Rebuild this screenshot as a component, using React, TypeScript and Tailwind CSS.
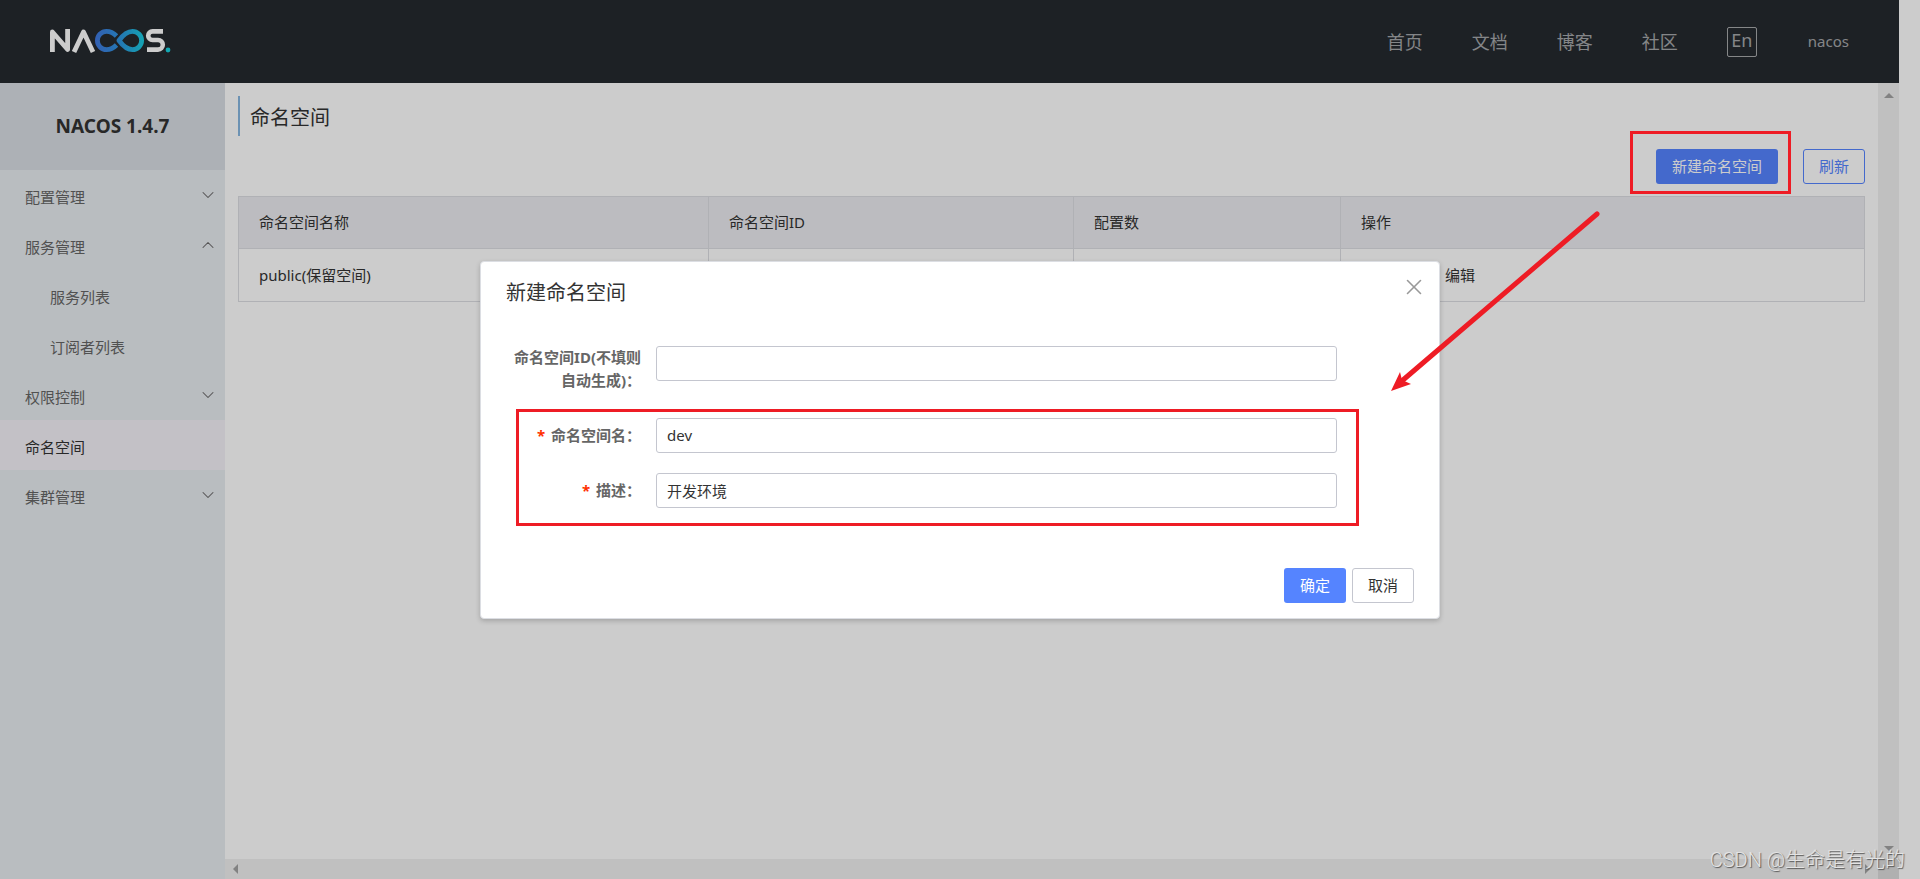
import React from "react";
import { ChevronDown, ChevronUp, X } from "lucide-react";

const fontStack = "font-['Noto_Sans','Noto_Sans_CJK_SC',sans-serif]";

const navItems = ["首页", "文档", "博客", "社区"];

const menuItems = [
  { label: "配置管理", arrow: "down" },
  { label: "服务管理", arrow: "up" },
  { label: "服务列表", child: true },
  { label: "订阅者列表", child: true },
  { label: "权限控制", arrow: "down" },
  { label: "命名空间", active: true },
  { label: "集群管理", arrow: "down" },
];

const Logo = () => (
  <svg width="122" height="26" viewBox="0 0 122 26" fill="none" aria-label="NACOS">
    <defs>
      <linearGradient id="loop" x1="45" y1="0" x2="96" y2="0" gradientUnits="userSpaceOnUse">
        <stop stopColor="#4078e0" />
        <stop offset="0.5" stopColor="#2d96e0" />
        <stop offset="1" stopColor="#18d2e0" />
      </linearGradient>
    </defs>
    <path d="M2.400 23V3L17.600 20.500V0" stroke="#fff" strokeWidth="4.8" strokeLinejoin="round" />
    <path d="M24 23L33.500 3L43 23" stroke="#fff" strokeWidth="4.8" strokeLinejoin="round" />
    <path
      d="M66.500 7C63.500 4 60 2.400 56.500 2.400a9.100 9.100 0 0 0 0 18.200c3.500 0 7-1.600 10-4.600M69 11.500C73 6 77.500 2.400 82.500 2.400a9.100 9.100 0 0 1 0 18.200c-5 0-9.500-3.600-13.500-9.100Z"
      stroke="url(#loop)"
      strokeWidth="4.8"
      strokeLinejoin="round"
    />
    <path
      d="M113 2.400h-10.500a4.300 4.300 0 0 0 0 8.600h5.500a4.800 4.800 0 0 1 0 9.600H97"
      stroke="#fff"
      strokeWidth="4.6"
    />
    <circle cx="118" cy="21" r="2.400" fill="#18d2e0" />
  </svg>
);

const Header = () => (
  <header className="flex h-[83px] shrink-0 items-center justify-between bg-[#252a2f] px-[50px]">
    <a href="#">
      <Logo />
    </a>
    <nav className="flex items-center gap-[49px] text-lg text-white/60">
      {navItems.map((item) => (
        <a key={item} href="#">
          {item}
        </a>
      ))}
      <button className="h-[30px] w-[30px] rounded-xs border border-white/60 pb-1 leading-6">
        En
      </button>
      <a href="#" className="pl-0.5 text-[15px]">
        nacos
      </a>
    </nav>
  </header>
);

const Sidebar = () => (
  <aside className="w-[225px] shrink-0 bg-[#e8edf0] text-[15px] text-[#666]">
    <h1 className="flex h-[87px] items-center justify-center bg-[#d9dee4] text-[19px] font-bold text-[#333]">
      NACOS 1.4.7
    </h1>
    <ul>
      {menuItems.map((item) => (
        <li key={item.label}>
          <a
            href="#"
            className={`flex h-[50px] items-center justify-between pr-[7px] ${
              item.child ? "pl-[50px]" : "pl-[25px]"
            } ${item.active ? "bg-[#f4f2f8] text-[#333]" : ""}`}
          >
            <span className="pt-1">{item.label}</span>
            {item.arrow === "down" && <ChevronDown size={20} strokeWidth={1.25} />}
            {item.arrow === "up" && <ChevronUp size={20} strokeWidth={1.25} />}
          </a>
        </li>
      ))}
    </ul>
  </aside>
);

const NamespaceTable = () => (
  <table className="mt-3 w-full table-fixed border-collapse text-left text-[15px] text-[#333]">
    <colgroup>
      <col className="w-[470px]" />
      <col className="w-[365px]" />
      <col className="w-[267px]" />
      <col />
    </colgroup>
    <thead className="bg-[#ebecf0]">
      <tr className="h-[52px]">
        {["命名空间名称", "命名空间ID", "配置数", "操作"].map((title) => (
          <th key={title} className="border border-[#dcdee3] px-5 font-normal">
            {title}
          </th>
        ))}
      </tr>
    </thead>
    <tbody>
      <tr className="h-[53px]">
        <td className="border border-[#dcdee3] px-5">public(保留空间)</td>
        <td className="border border-[#dcdee3] px-5"></td>
        <td className="border border-[#dcdee3] px-5">0</td>
        <td className="border border-[#dcdee3] px-5">
          <div className="flex gap-3">
            <a href="#">详情</a>
            <a href="#">删除</a>
            <a href="#">编辑</a>
          </div>
        </td>
      </tr>
    </tbody>
  </table>
);

const Content = () => (
  <main className="grid min-w-0 flex-1 grid-cols-[1fr_21px] grid-rows-[1fr_20px]">
    <section className="px-[13px] pt-[13px]">
      <h2 className="h-10 border-l-2 border-[#88b7e0] pl-[10px] text-xl leading-11 text-[#333]">
        命名空间
      </h2>
      <div className="mt-[13px] flex justify-end gap-[25px] text-[15px]">
        <div className="relative">
          <button className="h-[35px] rounded-[3px] bg-[#5584ff] px-4 text-white">
            新建命名空间
          </button>
          <div className="absolute -top-[18px] -right-[13px] -bottom-[10px] -left-[26px] z-20 border-3 border-[#ee1c25]" />
        </div>
        <button className="h-[35px] rounded-[3px] border border-[#5584ff] px-[15px] text-[#5584ff]">
          刷新
        </button>
      </div>
      <NamespaceTable />
    </section>
    <div className="flex flex-col items-center justify-between bg-[#f1f1f1] pt-[10px] pb-2">
      <svg width="10" height="5" fill="#a3a3a3">
        <path d="M0 5L5 0L10 5Z" />
      </svg>
      <svg width="10" height="5" fill="#a3a3a3">
        <path d="M0 0L5 5L10 0Z" />
      </svg>
    </div>
    <div className="flex items-center justify-between bg-[#f1f1f1] px-2">
      <svg width="5" height="10" fill="#a3a3a3">
        <path d="M5 0L0 5L5 10Z" />
      </svg>
      <svg width="5" height="10" fill="#a3a3a3">
        <path d="M0 0L5 5L0 10Z" />
      </svg>
    </div>
    <div className="bg-[#dcdcdc]" />
  </main>
);

const fields = [
  { id: "namespaceId", label: "命名空间ID(不填则自动生成)：", value: "" },
  { id: "namespaceName", label: "命名空间名：", value: "dev", required: true },
  { id: "namespaceDesc", label: "描述：", value: "开发环境", required: true },
];

const Field = ({ id, label, value, required }: (typeof fields)[number]) => (
  <div className="flex gap-[15px]">
    <label
      htmlFor={id}
      className={`w-[136px] text-right text-[15px] leading-[23px] font-bold text-[#666] ${
        required ? "pt-[6px]" : ""
      }`}
    >
      {required && <span className="mr-0.5 text-[#ff3000]">* </span>}
      {label}
    </label>
    <input
      id={id}
      defaultValue={value}
      className="h-[35px] min-w-0 flex-1 rounded-[3px] border border-[#c4c6cf] px-[10px] text-[15px] text-[#333]"
    />
  </div>
);

const Dialog = () => (
  <div
    role="dialog"
    aria-label="新建命名空间"
    className="relative w-1/2 rounded-[4px] border border-[#dcdee3] bg-white shadow-[0_2px_5px_rgba(0,0,0,0.2)]"
  >
    <h3 className="px-[25px] pt-4 text-xl leading-[30px] text-[#333]">新建命名空间</h3>
    <button aria-label="关闭" className="absolute top-3 right-3 text-[#999]">
      <X size={26} strokeWidth={1.5} />
    </button>
    <form className="pt-[38px] pr-[102px] pl-6">
      <Field {...fields[0]} />
      <div className="relative mt-[26px] flex flex-col gap-5">
        <Field {...fields[1]} />
        <Field {...fields[2]} />
        <div className="pointer-events-none absolute -top-[9px] -right-[22px] -bottom-[18px] left-[11px] border-3 border-[#ee1c25]" />
      </div>
    </form>
    <div className="flex justify-end gap-[6px] px-[25px] pt-[60px] pb-[15px] text-[15px]">
      <button className="h-[35px] rounded-[3px] bg-[#5584ff] px-4 text-white">确定</button>
      <button className="h-[35px] rounded-[3px] border border-[#c4c6cf] px-[15px] text-[#333]">
        取消
      </button>
    </div>
    {/* arrow from the create button down to the form */}
    <svg
      className="absolute -top-[51px] -right-[161px]"
      width="212"
      height="184"
      viewBox="0 0 212 184"
      fill="none"
    >
      <path d="M209 3L15 169" stroke="#ee1c25" strokeWidth="5" strokeLinecap="round" />
      <path d="M3 180L12 161L14 169L23 173Z" fill="#ee1c25" />
    </svg>
  </div>
);

export default function App() {
  return (
    <div className={`relative h-screen overflow-hidden bg-white ${fontStack}`}>
      <div className="mr-[21px] flex h-full flex-col">
        <Header />
        <div className="flex flex-1">
          <Sidebar />
          <Content />
        </div>
      </div>
      <div className="absolute inset-0 z-10 flex items-center justify-center bg-black/20">
        <Dialog />
      </div>
      <p className="absolute right-[15px] bottom-[5px] z-20 font-['Roboto','Noto_Sans_CJK_SC',sans-serif] text-xl font-light text-[#e4e4e4] [text-shadow:1px_1px_1px_#555]">
        CSDN @生命是有光的
      </p>
    </div>
  );
}
